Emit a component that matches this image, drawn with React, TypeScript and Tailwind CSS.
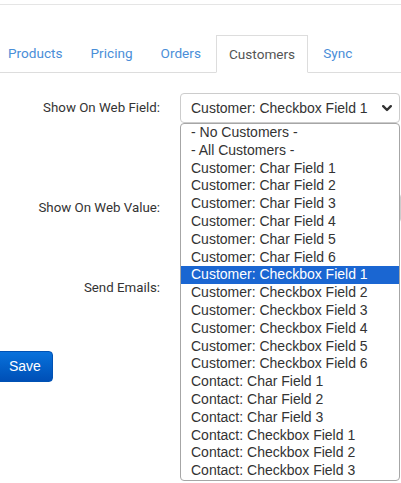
import { useState } from 'react'

const TABS = ['Products', 'Pricing', 'Orders', 'Customers', 'Sync']

const OPTIONS = [
  '- No Customers -',
  '- All Customers -',
  'Customer: Char Field 1',
  'Customer: Char Field 2',
  'Customer: Char Field 3',
  'Customer: Char Field 4',
  'Customer: Char Field 5',
  'Customer: Char Field 6',
  'Customer: Checkbox Field 1',
  'Customer: Checkbox Field 2',
  'Customer: Checkbox Field 3',
  'Customer: Checkbox Field 4',
  'Customer: Checkbox Field 5',
  'Customer: Checkbox Field 6',
  'Contact: Char Field 1',
  'Contact: Char Field 2',
  'Contact: Char Field 3',
  'Contact: Checkbox Field 1',
  'Contact: Checkbox Field 2',
  'Contact: Checkbox Field 3',
]

function Chevron() {
  return (
    <svg width="10" height="7" viewBox="0 0 10 7" className="shrink-0">
      <polyline points="1.2,1.2 5,5 8.8,1.2" fill="none" stroke="#333" strokeWidth="2.4" strokeLinecap="round" strokeLinejoin="round" />
    </svg>
  )
}

export default function App() {
  const [active] = useState('Customers')
  const selected = 'Customer: Checkbox Field 1'

  return (
    <div className="w-[401px] h-[483px] bg-white overflow-hidden font-['Roboto',sans-serif] text-[#333]">
      <div className="h-[4px]" />
      <div className="h-px bg-[#e5e5e5]" />

      {/* tabs */}
      <ul className="mt-[30px] flex h-[38px] border-b border-[#ddd] ml-[-5px]">
        {TABS.map((t) =>
          t === active ? (
            <li
              key={t}
              className="mr-[2px] h-[38px] px-[12px] flex items-center border border-[#ddd] border-b-white bg-white text-[13.6px] text-[#555]"
            >
              {t}
            </li>
          ) : (
            <li key={t} className="mr-[2px] h-[37px] px-[13px] flex items-center text-[13.6px] text-[#4a8ed8]">
              {t}
            </li>
          )
        )}
      </ul>

      {/* form */}
      <div className="flex flex-col">
        <div className="mt-[20px] flex h-[30px] items-center">
          <label className="w-[160px] text-right text-[13.3px]">Show On Web Field:</label>
          <div className="relative ml-[20px] w-[220px] h-[30px]">
            <div className="h-full flex items-center justify-between rounded-[4px] border border-[#ccc] bg-white pl-[10px] pr-[7px] font-['Liberation_Sans',Arial,sans-serif] text-[14px] text-[#333]">
              <span>{selected}</span>
              <Chevron />
            </div>
            <div className="absolute z-10 left-0 top-[30px] w-[220px] rounded-[4px] border border-[#a6a6a6] bg-white font-['Liberation_Sans',Arial,sans-serif] text-[14px] text-[#333] overflow-hidden">
              {OPTIONS.map((o) => (
                <div
                  key={o}
                  className={
                    o === selected
                      ? 'h-[17.8px] leading-[17.8px] pl-[10px] whitespace-nowrap bg-[#1a66d2] text-white'
                      : 'h-[17.8px] leading-[17.8px] pl-[10px] whitespace-nowrap'
                  }
                >
                  {o}
                </div>
              ))}
            </div>
          </div>
        </div>

        <div className="mt-[70px] flex h-[30px] items-center">
          <label className="w-[160px] text-right text-[13.3px]">Show On Web Value:</label>
          <div className="ml-[20px] w-[221px] h-[30px] rounded-[4px] border border-[#ccc]" />
        </div>

        <div className="mt-[50px] flex h-[30px] items-center">
          <label className="w-[160px] text-right text-[13.3px]">Send Emails:</label>
          <div className="ml-[20px] w-[220px] h-[30px] rounded-[4px] border border-[#ccc]" />
        </div>

        <div className="mt-[48px] flex">
          <button className="ml-[-4px] h-[31px] pl-[12px] pr-[11px] rounded-[4px] bg-gradient-to-b from-[#0a72dc] to-[#004fb6] border border-[#0052b4] text-white font-['Liberation_Sans',Arial,sans-serif] text-[14px]">
            Save
          </button>
        </div>
      </div>
    </div>
  )
}
